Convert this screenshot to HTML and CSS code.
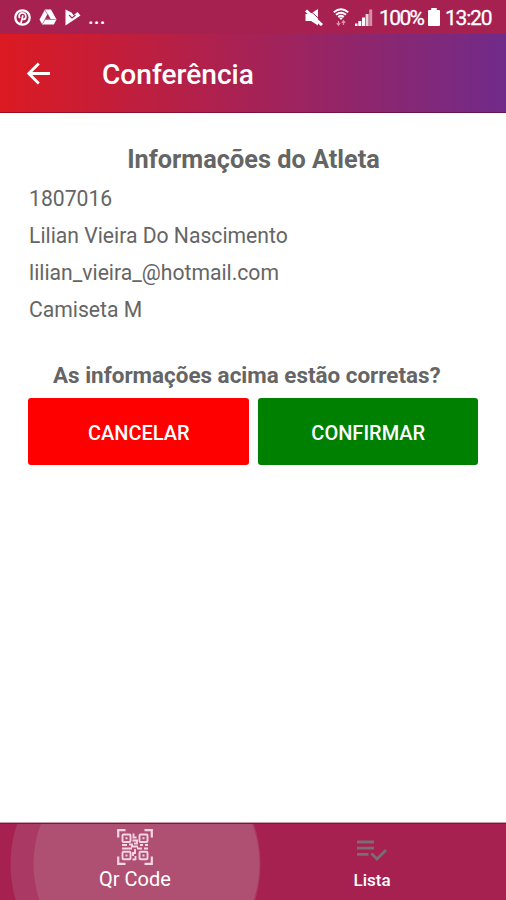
FILE: index.html
```html
<!DOCTYPE html>
<html lang="pt-BR">
<head>
<meta charset="utf-8">
<meta name="viewport" content="width=device-width">
<title>Conferência</title>
<link rel="stylesheet" href="styles.css">
</head>
<body>
<div class="status">
  <svg class="ic-pin" viewBox="0 0 17 17"><circle cx="8.5" cy="8.5" r="7.2" fill="none" stroke="#fff" stroke-width="2.300"/><path d="M5.800 9.200C3.600 5.300 7 3.800 9 4c3.800.3 3.600 6.200.6 6.300C8.300 10.400 8 9.300 8 9.300M8.900 6.200L6.900 14.500" fill="none" stroke="#fff" stroke-width="1.700"/></svg>
  <svg class="ic-drive" viewBox="0 0 18 16"><path d="M6 .5h6L17.500 10.500 14.800 15.500H3.200L.5 10.500Z" fill="#fff"/><path d="M8.700 5.500L11 9.700H6.300ZM6 1l5.500 9.500M5.700 10.500h11M6 10.500L3.400 15" fill="#a62050" stroke="#a62050" stroke-width=".6"/></svg>
  <svg class="ic-play" viewBox="0 0 16 17"><path d="M.5.500l6 3 2 2.800L12.500 3l3 3.500L.5 16.500Z" fill="#fff"/><path d="M4 6L7 9 10.500 6" fill="none" stroke="#a62050" stroke-width="1.100"/></svg>
  <span class="dots">...</span>
  <svg class="ic-mute" viewBox="0 0 18 17"><path d="M.5 5h4.500L13 0v16.500L6 12H.5Z" fill="#fff"/><path d="M5 1.500L17.500 13" stroke="#a62050" stroke-width="1"/><path d="M1 1.500L17 16" stroke="#fff" stroke-width="3"/></svg>
  <svg class="ic-wifi" viewBox="0 0 16 18"><g fill="none" stroke="#fff" stroke-width="1.900"><path d="M.8 4.300Q8-1.700 15.200 4.300M3 6.800Q8 2.700 13 6.800M5.200 9Q8 6.700 10.800 9"/></g><path d="M5.800 9.500h4.400L8 12Z" fill="#fff"/><path d="M5.500 13v4M3.800 15.200l1.700 2 1.700-2M10.500 17v-4M8.800 14.800l1.700-2 1.700 2" fill="none" stroke="#d995b0" stroke-width="1.200"/></svg>
  <svg class="ic-signal" viewBox="0 0 18 18"><g fill="#fff"><path d="M0 15.500h2.500V18H0ZM3.300 13h3v5h-3ZM7 9.500h3V18H7Z"/><path d="M10.600 6h3v12h-3Z" opacity=".8"/><path d="M14.200 1.500h3V18h-3Z" opacity=".5"/></g></svg>
  <span class="percent">100%</span>
  <svg class="ic-battery" viewBox="0 0 12 18"><path d="M3.200 0h5.600v2H11q1 0 1 1v14q0 1-1 1H1q-1 0-1-1V3q0-1 1-1h2.200Z" fill="#fff"/></svg>
  <span class="clock">13:20</span>
</div>
<header class="appbar">
  <svg class="back" viewBox="0 0 24 24"><path d="M23 11.500H2M11.800 1.500L1.800 11.500l10 10" fill="none" stroke="#fff" stroke-width="2.800"/></svg>
  <h1>Conferência</h1>
</header>
<main>
  <h2>Informações do Atleta</h2>
  <p class="l1">1807016</p>
  <p>Lilian Vieira Do Nascimento</p>
  <p>lilian_vieira_@hotmail.com</p>
  <p>Camiseta M</p>
  <h3>As informações acima estão corretas?</h3>
  <div class="actions">
    <button class="cancel">CANCELAR</button>
    <button class="confirm">CONFIRMAR</button>
  </div>
</main>
<nav>
  <svg class="ripple" viewBox="0 0 506 76"><circle cx="135.500" cy="40" r="125"/><circle cx="146.500" cy="40" r="113"/></svg>
  <a class="tab qr">
    <svg viewBox="0 0 36 36"><g fill="none" stroke="#f8d5e2"><path d="M1.200 8.500V1.200H8.500M27.500 1.200h7.300V8.500M34.800 27.500v7.300H27.500M8.500 34.800H1.200V27.500" stroke-width="2.200"/><g stroke-width="1.900"><rect x="5.500" y="5.500" width="8" height="7.500" rx="1"/><rect x="22.500" y="5.500" width="8" height="7.500" rx="1"/><rect x="5.500" y="22.800" width="8" height="7.500" rx="1"/><rect x="22.500" y="22.800" width="8" height="7.500" rx="1"/><path d="M8.500 9.300h2M25.500 9.300h2M8.500 26.500h2M25.500 26.500h2M16.500 4.500v4h3M15.500 11.500h4.500v3h-3M5 16h5M12 15.500h3v2h6M23 16h3M28 16h3M5 19.500h10M18 20v4h-2v3M20 19.500h5M27 19.500h4M18.500 27v4M15.500 30.500h3"/></g></g></svg>
    <span>Qr Code</span>
  </a>
  <a class="tab lista">
    <svg viewBox="0 0 30 21"><path d="M0 2h17M0 8.200h17M0 14.300h11.500M14.500 13.500l5.500 5.500L29 10" fill="none" stroke="#7b6c77" stroke-width="2.800"/></svg>
    <span>Lista</span>
  </a>
</nav>
</body>
</html>
```
FILE: styles.css
```css
* { box-sizing: border-box; }
html, body { height: 100%; }
body {
  margin: 0;
  display: flex;
  flex-direction: column;
  background: #fff;
  font-family: Roboto, "Liberation Sans", sans-serif;
  color: #656565;
  overflow: hidden;
}
svg { display: block; flex: none; }
h1, h2, h3, p { margin: 0; white-space: nowrap; }

.status {
  flex: none;
  height: 34px;
  display: flex;
  align-items: center;
  padding: 0 14px;
  background: #a62050;
  color: #fff;
  font-size: 21px;
  line-height: 34px;
}
.ic-pin { width: 17px; height: 17px; }
.ic-drive { width: 18px; height: 16px; margin-left: 8px; }
.ic-play { width: 16px; height: 17px; margin-left: 8px; }
.dots { margin-left: 7px; font-weight: 500; }
.ic-mute { width: 18px; height: 17px; margin-left: auto; }
.ic-wifi { width: 16px; height: 18px; margin-left: 10px; }
.ic-signal { width: 18px; height: 18px; margin-left: 6px; }
.percent { width: 45px; margin-left: 6px; letter-spacing: -1.6px; white-space: nowrap; }
.ic-battery { width: 12px; height: 18px; margin-left: 4px; }
.clock { width: 47px; margin-left: 5px; letter-spacing: -1.2px; }
.percent, .clock { padding-top: 2px; -webkit-text-stroke: .3px #fff; }

.appbar {
  flex: none;
  height: 79px;
  display: flex;
  align-items: center;
  padding-left: 27px;
  background: linear-gradient(90deg, #dc1a22 0%, #a62256 50%, #702b8a 100%);
  box-shadow: inset 0 -1px rgba(80, 0, 30, .45);
  color: #fff;
}
.back { width: 24px; height: 24px; }
h1 { margin: 3px 0 0 51px; font-size: 28.1px; font-weight: 500; line-height: 32px; }

main { flex: 1; padding: 28px 28px 0 29px; }
h2 { text-align: center; font-size: 25.3px; font-weight: 700; line-height: 38px; }
p { height: 37px; font-size: 21.15px; line-height: 37px; }
p.l1 { margin-top: 1px; }
h3 { margin: 29px 0 0 24px; font-size: 22.45px; font-weight: 700; line-height: 36px; }
.actions { display: flex; gap: 9px; margin-top: 5px; margin-left: -1px; }
button {
  flex: 1;
  height: 67px;
  padding: 2px 0 0;
  border: 0;
  border-radius: 3px;
  font: 500 20px Roboto, sans-serif;
  color: #fff;
}
.cancel { background: #f00; padding-left: 1px; }
.confirm { background: #008000; padding-left: 1px; }

nav {
  position: relative;
  flex: none;
  height: 78px;
  display: flex;
  background: #a62050;
  border-top: 1px solid #c79aad;
  color: #fff;
  box-shadow: inset 0 1px #8a1038;
}
.ripple { position: absolute; left: 0; top: 1px; width: 506px; height: 76px; }
.ripple circle { fill: #af5072; }
.ripple circle:first-child { fill: #aa3964; }
.tab { position: relative; display: flex; flex-direction: column; align-items: center; }
.qr { width: 270px; padding-top: 6px; font-size: 20px; }
.qr svg { width: 36px; height: 36px; }
.qr span { margin-top: 2px; line-height: 24px; }
.lista { width: 204px; padding-top: 17px; font-size: 17px; font-weight: 500; }
.lista svg { width: 30px; height: 21px; }
.lista span { margin-top: 9px; line-height: 20px; }
```
